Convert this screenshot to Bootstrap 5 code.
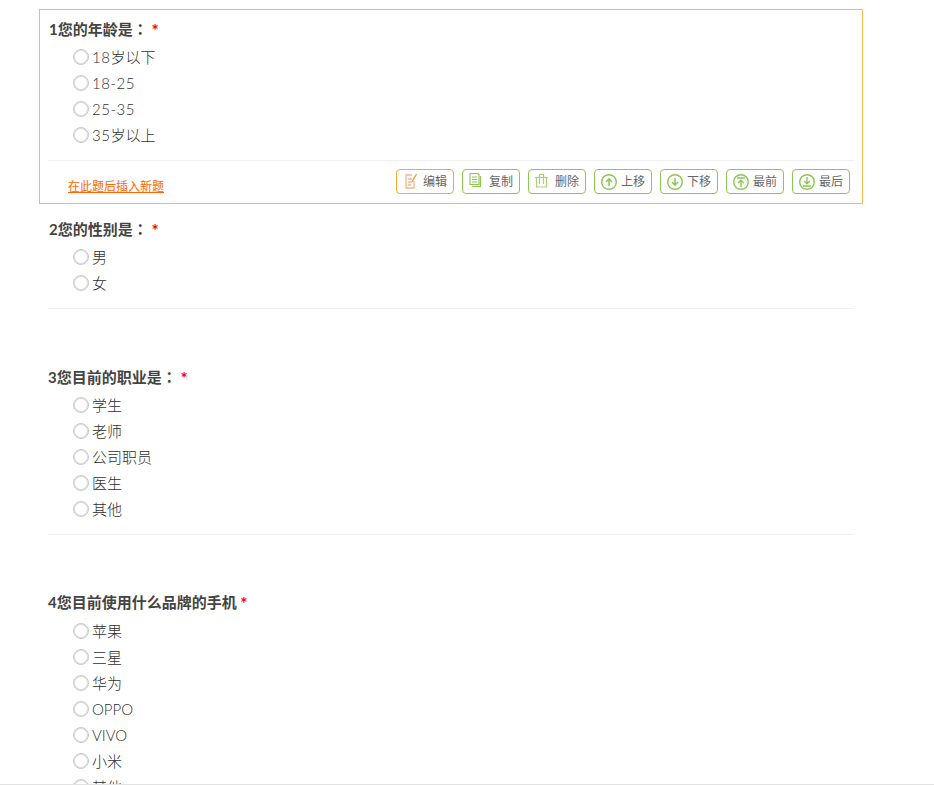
<!DOCTYPE html>
<html lang="zh-CN">
<head>
<meta charset="utf-8">
<title>问卷</title>
<link href="https://cdn.jsdelivr.net/npm/bootstrap@5.3.0/dist/css/bootstrap.min.css" rel="stylesheet">
<style>
html,body{height:100%;overflow:hidden;background:#fff}
body{font-family:"Lato","Noto Sans CJK SC",sans-serif;color:#444}
.viewport-clip{height:785px;overflow:hidden;border-bottom:1px solid #e3e3e3;padding:9px 0 0 39px}
.q-item{width:824px;border:1px solid transparent;padding:8px 9px 0 8px}
.q-item.is-active{border-color:#f7b955;height:195px;padding-bottom:0;margin-bottom:5px}
.q-gap{margin-bottom:47px}
.q-title{font-size:15px;font-weight:700;line-height:21px;height:21px;color:#444;margin-left:1px;white-space:pre}
.q-title.t3{margin-left:0}
.q-colon{font-family:"Noto Sans CJK TC",sans-serif}
.q-star{color:#f00;font-size:17px;line-height:15px;vertical-align:-2px}
.q-opts{padding:5px 0 0 25px;margin:0;list-style:none}
.q-opt{height:26px;display:flex;align-items:center;font-size:15px;font-weight:300;color:#2f2f2f}
.q-num{letter-spacing:.5px}
.q-radio.form-check-input{width:16px;height:16px;margin:0 3px 0 0;border:1px solid #c8c8c8;box-shadow:inset 0 0 0 1px #ddd;flex:none;float:none}
.q-rule{border-top:1px solid #f0f0f0;margin-top:12px;height:0;width:806px}
.q-tools{height:43px;padding-right:3px}
.q-insert{font-size:12px;color:#f60;margin:17px 0 0 20px;text-decoration:underline}
.q-insert:hover{color:#f60}
.q-btn{width:58px;height:25px;border:1px solid #8cc653;border-radius:4px;background:#fff;font-size:12px;color:#666;padding:0 5px;gap:3px;margin-top:8px;font-weight:400;white-space:nowrap}
.q-btn.q-orange{border-color:#fca62f}
.q-btn svg{flex:none;width:18px;height:18px}
</style>
</head>
<body>
<div class="viewport-clip">

<section class="q-item is-active">
<div class="q-title">1您的年龄是<span class="q-colon" lang="zh-TW">：</span> <span class="q-star">*</span></div>
<ul class="q-opts">
<li class="q-opt"><input class="form-check-input q-radio" type="radio" name="q1"><span><span class="q-num">18</span>岁以下</span></li>
<li class="q-opt"><input class="form-check-input q-radio" type="radio" name="q1"><span class="q-num">18-25</span></li>
<li class="q-opt"><input class="form-check-input q-radio" type="radio" name="q1"><span class="q-num">25-35</span></li>
<li class="q-opt"><input class="form-check-input q-radio" type="radio" name="q1"><span><span class="q-num">35</span>岁以上</span></li>
</ul>
<div class="q-rule"></div>
<div class="q-tools d-flex justify-content-between align-items-start">
<a class="q-insert" href="#">在此题后插入新题</a>
<div class="d-flex gap-2">
<button type="button" class="q-btn q-orange d-flex align-items-center"><svg viewBox="0 0 18 18" fill="none" stroke="#f7b48a" stroke-width="1.300"><path d="M12 8v7H4V2h6"/><path d="M6 6h4M6 9h4M6 12h3"/><path d="M10 9l4.500-8" stroke="#f5a050" stroke-width="1.500"/></svg><span>编辑</span></button>
<button type="button" class="q-btn d-flex align-items-center"><svg viewBox="0 0 18 18" fill="none" stroke="#8cc653" stroke-width="1.100"><path d="M2 0.500h8l1 1v10H2z"/><path d="M4 4h5M4 6.500h5M4 9h5"/><path d="M12.500 3v10.500H4"/></svg><span>复制</span></button>
<button type="button" class="q-btn d-flex align-items-center"><svg viewBox="0 0 18 18" fill="none" stroke="#a8d46f" stroke-width="1.200"><path d="M2.500 4.500v9.500h10V4.500"/><path d="M1 4.500h13"/><path d="M5.500 11V1.500h4V11"/></svg><span>删除</span></button>
<button type="button" class="q-btn d-flex align-items-center"><svg viewBox="0 0 18 18" fill="none" stroke="#8cc653"><circle cx="9" cy="9" r="7.300" stroke-width="1.400"/><path d="M9 13V6M6 9l3-3.200L12 9" stroke-width="1.500"/></svg><span>上移</span></button>
<button type="button" class="q-btn d-flex align-items-center"><svg viewBox="0 0 18 18" fill="none" stroke="#8cc653"><circle cx="9" cy="9" r="7.300" stroke-width="1.400"/><path d="M9 5v7M6 9l3 3.200L12 9" stroke-width="1.500"/></svg><span>下移</span></button>
<button type="button" class="q-btn d-flex align-items-center"><svg viewBox="0 0 18 18" fill="none" stroke="#8cc653"><circle cx="9" cy="9" r="7.300" stroke-width="1.400"/><path d="M5 5h8M9 14V7.500M6.200 10L9 7.300 11.800 10" stroke-width="1.400"/></svg><span>最前</span></button>
<button type="button" class="q-btn d-flex align-items-center"><svg viewBox="0 0 18 18" fill="none" stroke="#8cc653"><circle cx="9" cy="9" r="7.300" stroke-width="1.400"/><path d="M5 13h8M9 4v6.500M6.200 8L9 10.700 11.800 8" stroke-width="1.400"/></svg><span>最后</span></button>
</div>
</div>
</section>

<section class="q-item q-gap">
<div class="q-title">2您的性别是<span class="q-colon" lang="zh-TW">：</span> <span class="q-star">*</span></div>
<ul class="q-opts">
<li class="q-opt"><input class="form-check-input q-radio" type="radio" name="q2"><span>男</span></li>
<li class="q-opt"><input class="form-check-input q-radio" type="radio" name="q2"><span>女</span></li>
</ul>
<div class="q-rule"></div>
</section>

<section class="q-item q-gap">
<div class="q-title t3">3您目前的职业是<span class="q-colon" lang="zh-TW">：</span> <span class="q-star">*</span></div>
<ul class="q-opts">
<li class="q-opt"><input class="form-check-input q-radio" type="radio" name="q3"><span>学生</span></li>
<li class="q-opt"><input class="form-check-input q-radio" type="radio" name="q3"><span>老师</span></li>
<li class="q-opt"><input class="form-check-input q-radio" type="radio" name="q3"><span>公司职员</span></li>
<li class="q-opt"><input class="form-check-input q-radio" type="radio" name="q3"><span>医生</span></li>
<li class="q-opt"><input class="form-check-input q-radio" type="radio" name="q3"><span>其他</span></li>
</ul>
<div class="q-rule"></div>
</section>

<section class="q-item">
<div class="q-title t3">4您目前使用什么品牌的手机 <span class="q-star">*</span></div>
<ul class="q-opts">
<li class="q-opt"><input class="form-check-input q-radio" type="radio" name="q4"><span>苹果</span></li>
<li class="q-opt"><input class="form-check-input q-radio" type="radio" name="q4"><span>三星</span></li>
<li class="q-opt"><input class="form-check-input q-radio" type="radio" name="q4"><span>华为</span></li>
<li class="q-opt"><input class="form-check-input q-radio" type="radio" name="q4"><span>OPPO</span></li>
<li class="q-opt"><input class="form-check-input q-radio" type="radio" name="q4"><span>VIVO</span></li>
<li class="q-opt"><input class="form-check-input q-radio" type="radio" name="q4"><span>小米</span></li>
<li class="q-opt"><input class="form-check-input q-radio" type="radio" name="q4"><span>其他</span></li>
</ul>
</section>

</div>
<script src="https://cdn.jsdelivr.net/npm/bootstrap@5.3.0/dist/js/bootstrap.bundle.min.js"></script>
</body>
</html>
